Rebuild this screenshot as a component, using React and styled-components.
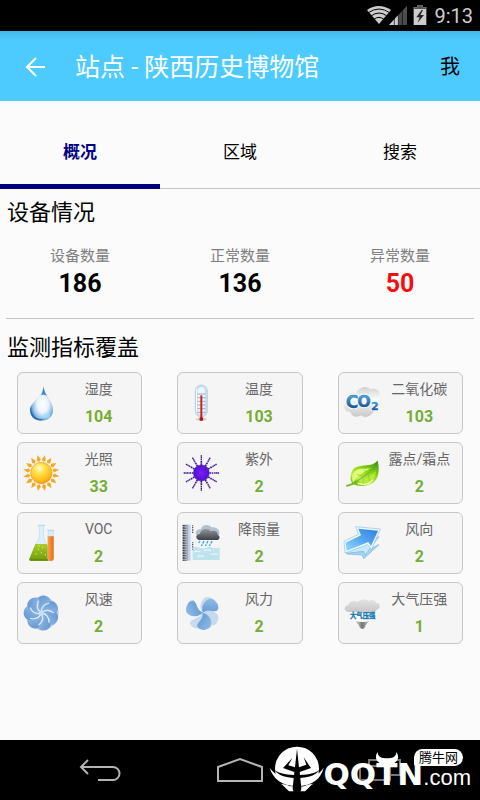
import React, { useState } from 'react';
import styled, { createGlobalStyle } from 'styled-components';

const GlobalStyle = createGlobalStyle`
  *,
  *::after {
    box-sizing: border-box;
  }

  body {
    margin: 0;
    background: #fbfbfb;
    color: #000;
    font-family: Roboto, "Noto Sans CJK SC", sans-serif;
  }

  button {
    padding: 0;
    border: 0;
    background: none;
    color: inherit;
    font-family: inherit;
    cursor: pointer;
  }
`;

const Page = styled.div`
  display: flex;
  flex-direction: column;
  min-height: 100vh;
`;

const StatusBar = styled.div`
  display: flex;
  align-items: center;
  justify-content: flex-end;
  height: 31px;
  padding-right: 7px;
  background: #000;
  color: #ccc;
  font-size: 20px;

  svg {
    margin-right: 7px;
  }
`;

const Header = styled.header`
  display: flex;
  align-items: center;
  height: 70px;
  padding: 2px 20px 0 22px;
  background: linear-gradient(#45b8e6 0, #4dcbfe 10px);
`;

const BackButton = styled.button`
  display: flex;
  width: 53px;
  color: #fff;
`;

const Title = styled.h1`
  flex: 1;
  margin: 0;
  padding-top: 2px;
  color: #fff;
  font-size: 25px;
  font-weight: 400;
  line-height: 38px;
`;

const MeButton = styled.button`
  font-size: 20px;
  line-height: 30px;
`;

const Tabs = styled.div`
  display: grid;
  grid-template-columns: repeat(3, 1fr);
  height: 88px;
`;

const Tab = styled.button`
  display: flex;
  flex-direction: column;
  justify-content: flex-end;
  align-items: center;
  font-size: 17px;
  line-height: 24px;
  font-weight: ${({ $active }) => ($active ? 700 : 400)};
  color: ${({ $active }) => ($active ? '#000080' : '#000')};

  &::after {
    content: '';
    width: 100%;
    height: 5px;
    margin-top: 20px;
    border-bottom: ${({ $active }) => ($active ? '5px solid #000080' : '1px solid #c4c4c4')};
  }
`;

const Section = styled.section`
  padding-top: 8px;
`;

const SectionTitle = styled.h2`
  margin: 0 7px;
  font-size: 22px;
  font-weight: 400;
  line-height: 32px;
`;

const Stats = styled.dl`
  display: grid;
  grid-template-columns: repeat(3, 1fr);
  margin: 16px 0 17px;
  text-align: center;
`;

const StatLabel = styled.dt`
  color: #808080;
  font-size: 15px;
  line-height: 22px;
`;

const StatValue = styled.dd`
  margin: 0;
  color: ${({ $alert }) => ($alert ? '#f01010' : '#000')};
  font-size: 25px;
  font-weight: 700;
  line-height: 34px;
`;

const Divider = styled.hr`
  height: 1px;
  margin: 0 6px;
  border: 0;
  background: #c4c4c4;
`;

const Cards = styled.div`
  display: grid;
  grid-template-columns: repeat(3, 1fr);
  gap: 8px 35px;
  padding: 0 17px;
`;

const Coverage = styled(Section)`
  display: flex;
  flex-direction: column;
  gap: 8px;
  flex: 1;
  padding: 13px 0;
`;

const Card = styled.div`
  display: flex;
  align-items: center;
  height: 62px;
  padding: 0 4px;
  border: 1px solid #c6c6c6;
  border-radius: 6px;
  background: #f5f5f5;

  svg {
    flex: none;
  }
`;

const CardText = styled.div`
  flex: 1;
  text-align: center;
  line-height: 27px;
`;

const CardLabel = styled.div`
  color: #666;
  font-size: 14px;
  white-space: nowrap;
`;

const CardValue = styled.div`
  color: #75ad35;
  font-size: 16px;
  font-weight: 700;
`;

const NavBar = styled.nav`
  position: relative;
  display: flex;
  align-items: center;
  justify-content: center;
  gap: 92px;
  height: 60px;
  background: #000;
`;

const NavButton = styled.button`
  display: flex;
  justify-content: center;
  width: 48px;
`;

/* site mark that lies over the navigation keys */
const Watermark = styled.div`
  position: absolute;
  right: 9px;
  bottom: 8px;
  display: flex;
  align-items: flex-end;
  color: #fff;
  pointer-events: none;
`;

const Brand = styled.div`
  position: relative;
  display: flex;
  align-items: baseline;
  line-height: 28px;
`;

const BrandName = styled.span`
  font-family: "DejaVu Sans", sans-serif;
  font-size: 31px;
  font-weight: 700;
`;

const BrandDomain = styled.span`
  font-family: "Liberation Sans", sans-serif;
  font-size: 22px;
`;

const Horns = styled.svg`
  position: absolute;
  left: 51px;
  top: -8px;
`;

const Bubble = styled.span`
  position: absolute;
  right: 8px;
  top: -11px;
  padding: 0 5px;
  border-radius: 9px 9px 9px 2px;
  background: #fff;
  color: #000;
  font-size: 13px;
  line-height: 17px;
  white-space: nowrap;
`;

const CardIcon = ({ children }) => (
  <svg width="38" height="38" viewBox="0 0 114 114" aria-hidden="true">
    {children}
  </svg>
);

const around = (count, offset = 0) =>
  Array.from({ length: count }, (_, i) => offset + (i * 360) / count);

const DropIcon = () => (
  <CardIcon>
    <defs>
      <radialGradient id="drop" cx="0.55" cy="0.52" r="0.55">
        <stop offset="0" stopColor="#fff" />
        <stop offset="0.45" stopColor="#eaf3fb" />
        <stop offset="0.8" stopColor="#8dbce6" />
        <stop offset="1" stopColor="#2f72b8" />
      </radialGradient>
    </defs>
    <path d="M65 7C66 32 93 52 93 77C93 97 78 110 58 110C38 110 24 97 24 78C24 55 60 42 65 7Z" fill="url(#drop)" />
    <path d="M26 78C32 101 52 107 68 104C54 114 26 108 26 78Z" fill="#1d64ae" opacity="0.8" />
    <path d="M65 8C66 20 70 28 75 36C69 31 63 30 57 34C62 25 64 17 65 8Z" fill="#3f81c2" />
    <ellipse cx="74" cy="95" rx="11" ry="7" fill="#9fe0fa" opacity="0.7" />
  </CardIcon>
);

const ThermometerIcon = () => (
  <CardIcon>
    <ellipse cx="58" cy="106" rx="17" ry="4" fill="#d8cfcb" />
    <rect x="40" y="3" width="36" height="96" rx="18" fill="#c9e0ee" stroke="#a5c6db" strokeWidth="2" />
    <rect x="48" y="10" width="20" height="82" rx="10" fill="#eef6fb" />
    <path d="M46 30H70M46 41H70M46 52H70M46 63H70M46 74H70M46 85H70" stroke="#788c9b" strokeWidth="2" />
    <path d="M44 14V86" stroke="#fff" strokeWidth="3" />
    <path d="M58 34V104" stroke="#cf2028" strokeWidth="6" />
    <circle cx="58" cy="105" r="6" fill="#b3161d" />
  </CardIcon>
);

const Co2Icon = () => (
  <CardIcon>
    <defs>
      <linearGradient id="cloud" x2="0" y2="1">
        <stop offset="0" stopColor="#d2d2d2" />
        <stop offset="0.4" stopColor="#fafafa" />
        <stop offset="1" stopColor="#c8c8c8" />
      </linearGradient>
      <linearGradient id="co" x2="0" y2="1">
        <stop offset="0.2" stopColor="#4ba3dc" />
        <stop offset="0.9" stopColor="#0d4685" />
      </linearGradient>
    </defs>
    <path d="M22 84C2 84-3 62 12 53C8 32 28 24 38 30C46 8 72 4 82 16C100 10 114 22 108 38C116 54 110 72 96 76C88 98 66 104 54 94C42 102 26 98 22 84Z" fill="url(#cloud)" />
    <g fontFamily="DejaVu Sans" fontWeight="700" fill="url(#co)">
      <g stroke="#fff" strokeWidth="6" strokeLinejoin="round">
        <text x="8" y="72" fontSize="52">C</text>
        <text x="43" y="70" fontSize="48">O</text>
        <text x="84" y="77" fontSize="33">2</text>
      </g>
      <g stroke="#1f67a8" strokeWidth="1">
        <text x="8" y="72" fontSize="52">C</text>
        <text x="43" y="70" fontSize="48">O</text>
        <text x="84" y="77" fontSize="33">2</text>
      </g>
    </g>
  </CardIcon>
);

const SunIcon = () => (
  <CardIcon>
    <defs>
      <radialGradient id="sun" cx="0.4" cy="0.28" r="0.75">
        <stop offset="0" stopColor="#fffbd0" />
        <stop offset="0.35" stopColor="#ffe04a" />
        <stop offset="0.8" stopColor="#fbb91a" />
        <stop offset="1" stopColor="#ef9412" />
      </radialGradient>
    </defs>
    {around(16, 11).map((a) => (
      <path key={a} d="M58 2C60 9 64 13 64 18L58 23L52 18C52 13 56 9 58 2Z" fill="#f3a928" transform={`rotate(${a} 58 57)`} />
    ))}
    <circle cx="58" cy="57" r="32" fill="url(#sun)" stroke="#ee9c18" strokeWidth="2" />
  </CardIcon>
);

const UvIcon = () => (
  <CardIcon>
    <defs>
      <radialGradient id="uv">
        <stop offset="0" stopColor="#7b1cff" />
        <stop offset="1" stopColor="#5010c8" />
      </radialGradient>
    </defs>
    {around(12).map((a) => (
      <g key={a} transform={`rotate(${a} 58 57)`} stroke="#3d1391">
        <path d="M58 33V18" strokeWidth="5" strokeDasharray="5 2" />
        <path d="M58 18V3" strokeWidth="4" strokeDasharray="4 1" />
      </g>
    ))}
    <circle cx="58" cy="57" r="24" fill="url(#uv)" stroke="#4312a8" strokeWidth="1" />
  </CardIcon>
);

const LeafIcon = () => (
  <CardIcon>
    <defs>
      <linearGradient id="leaf" x1="0.8" x2="0.2" y2="1">
        <stop offset="0" stopColor="#3f9a12" />
        <stop offset="0.4" stopColor="#8fd41a" />
        <stop offset="0.75" stopColor="#c8ef4a" />
        <stop offset="1" stopColor="#5fae10" />
      </linearGradient>
    </defs>
    <path d="M104 20C110 46 108 72 92 85C74 99 46 98 30 90C18 78 20 50 38 40C56 30 86 40 104 20Z" fill="url(#leaf)" />
    <path d="M30 86C24 68 30 52 46 46C58 42 70 46 82 42C64 56 44 62 30 86Z" fill="#e2fa7c" />
    <path d="M44 88C58 94 78 91 91 77C96 70 98 60 98 50C88 64 66 74 44 88Z" fill="#b5ea38" />
    <path d="M10 95C28 92 46 80 64 66C82 54 98 40 104 20" fill="none" stroke="#3f9a15" strokeWidth="2" />
    <path d="M9 94C22 92 32 86 42 79L44 84C34 91 22 97 11 98Z" fill="#6db91c" />
    <path d="M60 69L60 92M74 59L82 83M86 48L98 64M60 67L42 62M74 57L62 48" stroke="#7cc926" strokeWidth="2" />
    <path d="M44 88C60 94 78 90 90 77" fill="none" stroke="#f1ffc0" strokeWidth="4" />
  </CardIcon>
);

const FlaskIcon = () => (
  <CardIcon>
    <defs>
      <linearGradient id="flask" x2="0" y2="1">
        <stop offset="0" stopColor="#a9cc28" />
        <stop offset="1" stopColor="#6f9a08" />
      </linearGradient>
      <linearGradient id="tube" x2="1" y2="0">
        <stop offset="0" stopColor="#ffa24a" />
        <stop offset="1" stopColor="#ea6a10" />
      </linearGradient>
    </defs>
    <path d="M52 5H65V40L74 62H41L52 40Z" fill="#dcf0f7" stroke="#b8dcea" strokeWidth="2" />
    <path d="M49 4H68" stroke="#b8dcea" strokeWidth="4" strokeLinecap="round" />
    <path d="M40 60H75L94 104Q95 110 88 111H27Q20 110 22 104Z" fill="url(#flask)" />
    <path d="M23 107H90" stroke="#628b06" strokeWidth="3" />
    <rect x="78" y="19" width="16" height="92" rx="7" fill="#d8edf6" stroke="#b8dcea" strokeWidth="2" />
    <path d="M77 37H95V104Q94 111 86 111Q77 111 77 103Z" fill="url(#tube)" />
    <path d="M77 19H95" stroke="#b8dcea" strokeWidth="4" strokeLinecap="round" />
    <g fill="#dbec86">
      <circle cx="50" cy="76" r="2" />
      <circle cx="62" cy="70" r="2" />
      <circle cx="58" cy="86" r="2" />
      <circle cx="42" cy="90" r="2" />
      <circle cx="70" cy="92" r="2" />
      <circle cx="51" cy="66" r="2" />
    </g>
  </CardIcon>
);

const RainIcon = () => (
  <CardIcon>
    <defs>
      <linearGradient id="rain" x2="0" y2="1">
        <stop offset="0" stopColor="#8f959b" />
        <stop offset="1" stopColor="#3c4147" />
      </linearGradient>
    </defs>
    <rect x="2" y="2" width="15" height="108" fill="#b9bcc2" />
    <path d="M5 3V110" stroke="#34363b" strokeWidth="6" strokeDasharray="3 2" />
    <path d="M11 3V110" stroke="#5b5e65" strokeWidth="5" strokeDasharray="2 3" />
    <rect x="17" y="2" width="9" height="108" fill="#c3d3f1" />
    <path d="M17 2V110" stroke="#8291b4" strokeWidth="2" />
    <path d="M32 4V28M32 55V80" stroke="#555" strokeWidth="4" strokeDasharray="3 2" />
    <path d="M32 70Q42 67 52 71T72 71T92 71T113 70V108H32Z" fill="#bfe3ec" />
    <path d="M36 84Q46 79 56 84M66 80Q76 75 86 80M88 92Q98 87 108 92M46 98Q56 93 66 98" fill="none" stroke="#e6f6f9" strokeWidth="4" />
    <path d="M42 32C38 20 48 14 56 16C60 0 82 0 88 10C104 8 116 18 111 34Z" fill="#b4c0cd" />
    <path d="M50 48C38 42 42 29 54 30C56 14 78 10 86 22C98 16 108 24 107 32C118 38 112 50 101 48Z" fill="url(#rain)" />
    <path d="M54 51L50 57M66 51L62 59M78 51L74 58M90 51L86 58M61 61L58 66M73 61L70 66M85 61L82 66" stroke="#35a8dd" strokeWidth="4" />
  </CardIcon>
);

const ArrowIcon = () => (
  <CardIcon>
    <defs>
      <linearGradient id="arrow" x1="1" x2="0" y2="1">
        <stop offset="0" stopColor="#2b7de3" />
        <stop offset="0.6" stopColor="#62b0f3" />
        <stop offset="1" stopColor="#9ad6ff" />
      </linearGradient>
    </defs>
    <g strokeLinejoin="round">
      <path d="M10 80L60 84L108 62L62 104L58 93L12 90Z" fill="#a8d8f4" stroke="#6fb0da" strokeWidth="2" />
      <path d="M8 72L70 60L108 38L66 94L62 82L10 88Z" fill="#c9e9fc" stroke="#6fb0da" strokeWidth="2" />
      <path d="M3 52L46 31L38 8L112 15L86 76L74 62L6 87Z" fill="#edf8ff" stroke="#8cc4ea" strokeWidth="2" />
      <path d="M8 56L54 34L46 14L105 20L84 66L76 54L11 80Z" fill="url(#arrow)" />
    </g>
  </CardIcon>
);

const FanIcon = () => (
  <CardIcon>
    <defs>
      <linearGradient id="petal" x2="1" y2="1">
        <stop offset="0" stopColor="#5f93cf" />
        <stop offset="1" stopColor="#a3c6ea" />
      </linearGradient>
    </defs>
    <circle cx="60" cy="58" r="50" fill="#bdd6ee" />
    {around(7, 10).map((a) => (
      <path key={a} d="M58 57C42 46 34 26 42 12C52-1 74 3 80 16C84 28 62 34 58 57Z" fill="url(#petal)" transform={`rotate(${a} 58 57)`} />
    ))}
    {around(7, 10).map((a) => (
      <path key={a} d="M58 57C54 42 62 30 76 24" fill="none" stroke="#dceaf8" strokeWidth="4" transform={`rotate(${a} 58 57)`} />
    ))}
    <circle cx="58" cy="57" r="8" fill="#c7def4" />
  </CardIcon>
);

const WindIcon = () => (
  <CardIcon>
    <defs>
      <linearGradient id="blade" x2="1" y2="1">
        <stop offset="0" stopColor="#95bee8" />
        <stop offset="1" stopColor="#5a92cf" />
      </linearGradient>
    </defs>
    {around(4, 20).map((a) => (
      <path key={a} d="M62 56C46 46 44 26 52 12C62 0 86 4 88 16C86 30 66 34 62 56Z" fill="#c5daef" transform={`rotate(${a} 62 56)`} />
    ))}
    {around(3, -65).map((a) => (
      <path key={a} d="M62 56C40 48 34 26 42 12C54 0 80 2 82 18C80 30 62 34 62 56Z" fill="url(#blade)" transform={`rotate(${a} 62 56)`} />
    ))}
  </CardIcon>
);

const PressureIcon = () => (
  <CardIcon>
    <defs>
      <linearGradient id="gray" x2="0" y2="1">
        <stop offset="0" stopColor="#e4e4e4" />
        <stop offset="1" stopColor="#c6c6c6" />
      </linearGradient>
      <linearGradient id="cone" x2="1" y2="0">
        <stop offset="0" stopColor="#d8d8d8" />
        <stop offset="0.5" stopColor="#777" />
        <stop offset="1" stopColor="#d8d8d8" />
      </linearGradient>
    </defs>
    <path d="M16 54C2 52 2 36 15 34C18 20 36 18 44 24C54 12 72 14 76 22C86 14 98 18 99 26C114 26 114 44 102 46C98 58 84 56 78 54Z" fill="url(#gray)" />
    <path d="M22 56H98V74H88C84 84 68 88 66 100Q58 115 49 100C47 88 32 84 28 74H22Z" fill="#fff" />
    <path d="M36 80Q58 88 80 80C74 88 67 91 67 98Q58 112 49 98C49 91 42 88 36 80Z" fill="url(#cone)" />
    <text x="59" y="72" textAnchor="middle" fontFamily="Noto Sans CJK SC" fontSize="19" fontWeight="700" fill="#1579b5" stroke="#1579b5" strokeWidth="1">大气压强</text>
  </CardIcon>
);

const TABS = ['概况', '区域', '搜索'];

const STATS = [
  { label: '设备数量', value: 186 },
  { label: '正常数量', value: 136 },
  { label: '异常数量', value: 50, alert: true },
];

const METRICS = [
  { label: '湿度', value: 104, Icon: DropIcon },
  { label: '温度', value: 103, Icon: ThermometerIcon },
  { label: '二氧化碳', value: 103, Icon: Co2Icon },
  { label: '光照', value: 33, Icon: SunIcon },
  { label: '紫外', value: 2, Icon: UvIcon },
  { label: '露点/霜点', value: 2, Icon: LeafIcon },
  { label: 'VOC', value: 2, Icon: FlaskIcon },
  { label: '降雨量', value: 2, Icon: RainIcon },
  { label: '风向', value: 2, Icon: ArrowIcon },
  { label: '风速', value: 2, Icon: FanIcon },
  { label: '风力', value: 2, Icon: WindIcon },
  { label: '大气压强', value: 1, Icon: PressureIcon },
];

const StatusIcons = () => (
  <svg width="60" height="21" viewBox="0 0 180 63" aria-hidden="true">
    <path d="M0 15Q35-9 72 15L36 57Z" fill="#ccc" />
    <path d="M4 23Q36 1 68 23M12 33Q36 15 60 33M21 43Q36 31 51 43" fill="none" stroke="#000" strokeWidth="3" />
    <path d="M66 60L120 2V60Z" fill="#4c4c4c" />
    <path d="M66 60L94 30V60Z" fill="#ccc" />
    <path d="M82 0V60M94 0V60M106 0V60" stroke="#000" strokeWidth="2" />
    <path d="M151 1H167V7H178V60H140V7H151Z" fill="#ccc" />
    <path d="M151 1H167V7H178V12H140V7H151Z" fill="#555" />
    <path d="M164 15L148 37H158L152 53L171 30H160L168 15Z" fill="#222" />
  </svg>
);

const Emblem = () => (
  <svg width="55" height="46" viewBox="28 32 165 138" aria-hidden="true">
    <circle cx="112" cy="100" r="66" fill="#fff" />
    <path d="M28 96C38 124 72 134 112 134C152 134 184 124 194 96C186 138 158 154 112 154C66 154 36 138 28 96Z" fill="#000" />
    <path d="M30 97C46 122 78 130 112 130C146 130 178 122 192 97C184 130 158 152 112 152C66 152 40 130 30 97Z" fill="#fff" />
    <path d="M44 104C60 116 86 119 112 119C138 119 164 116 180 104C166 122 142 128 112 128C82 128 58 122 44 104Z" fill="#000" />
    <path d="M112 40L118 96L140 88L132 66L154 98L120 110L126 168H98L104 110L70 98L98 68L86 90L106 96Z" fill="#000" />
    <path d="M68 146Q96 148 102 168H88Q76 158 68 146ZM156 146Q128 148 122 168H136Q148 158 156 146Z" fill="#fff" />
  </svg>
);

export default function App() {
  const [tab, setTab] = useState(0);

  return (
    <Page>
      <GlobalStyle />
      <StatusBar>
        <StatusIcons />
        <span>9:13</span>
      </StatusBar>

      <Header>
        <BackButton aria-label="返回">
          <svg width="26" height="26" viewBox="0 0 26 26" fill="none" stroke="currentColor" strokeWidth="2">
            <path d="M23 13H5M14 4L5 13L14 22" />
          </svg>
        </BackButton>
        <Title>站点 - 陕西历史博物馆</Title>
        <MeButton>我</MeButton>
      </Header>

      <Tabs role="tablist">
        {TABS.map((name, i) => (
          <Tab key={name} role="tab" aria-selected={i === tab} $active={i === tab} onClick={() => setTab(i)}>
            {name}
          </Tab>
        ))}
      </Tabs>

      <Section>
        <SectionTitle>设备情况</SectionTitle>
        <Stats>
          {STATS.map(({ label, value, alert }) => (
            <div key={label}>
              <StatLabel>{label}</StatLabel>
              <StatValue $alert={alert}>{value}</StatValue>
            </div>
          ))}
        </Stats>
        <Divider />
      </Section>

      <Coverage>
        <SectionTitle>监测指标覆盖</SectionTitle>
        <Cards>
          {METRICS.map(({ label, value, Icon }) => (
            <Card key={label}>
              <Icon />
              <CardText>
                <CardLabel>{label}</CardLabel>
                <CardValue>{value}</CardValue>
              </CardText>
            </Card>
          ))}
        </Cards>
      </Coverage>

      <NavBar>
        <NavButton aria-label="后退">
          <svg width="42" height="24" viewBox="0 0 42 24" fill="none" stroke="#b4b4b4" strokeWidth="2">
            <path d="M9 2L2 9L9 16M2 9H34A6 6 0 0 1 34 22H19" />
          </svg>
        </NavButton>
        <NavButton aria-label="主屏幕">
          <svg width="46" height="26" viewBox="0 0 46 26" fill="none" stroke="#b4b4b4" strokeWidth="2">
            <path d="M1 10L23 2L45 10V24H1Z" />
          </svg>
        </NavButton>
        <NavButton aria-label="最近任务">
          <svg width="42" height="24" viewBox="0 0 42 24" fill="none" stroke="#777" strokeWidth="2">
            <path d="M1 8H31V22H1ZM10 8V2H41V17H31" />
          </svg>
        </NavButton>
        <Watermark>
          <Emblem />
          <Brand>
            <BrandName>QQTN</BrandName>
            <BrandDomain>.com</BrandDomain>
            <Horns width="24" height="13" viewBox="0 0 72 39" aria-hidden="true">
              <path d="M8 0C-6 20 10 38 36 38C62 38 78 20 64 0C64 16 50 19 36 19C22 19 8 16 8 0Z" fill="#fff" />
            </Horns>
            <Bubble>腾牛网</Bubble>
          </Brand>
        </Watermark>
      </NavBar>
    </Page>
  );
}
